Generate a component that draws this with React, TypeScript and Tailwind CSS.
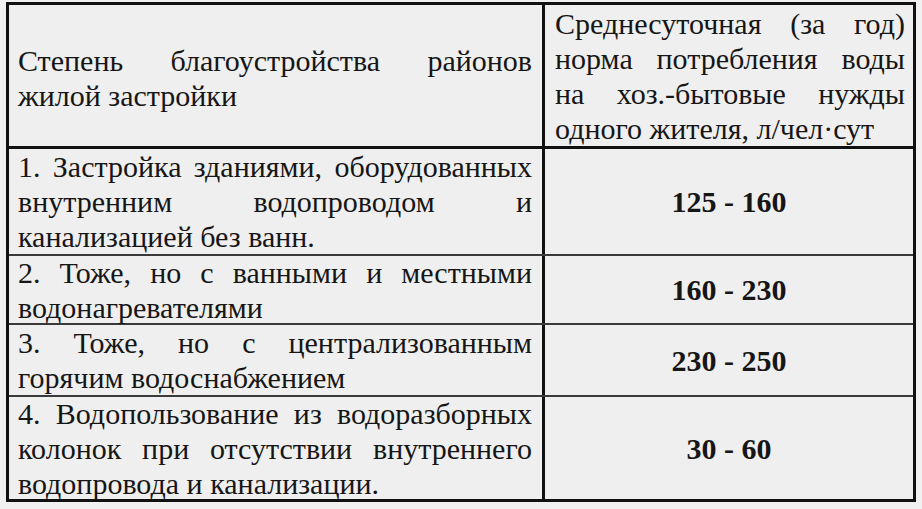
const rows = [
  {
    lines: ['1. Застройка зданиями, оборудованных', 'внутренним водопроводом и', 'канализацией без ванн.'],
    norm: '125 - 160',
    h: 'h-[107px]',
  },
  {
    lines: ['2. Тоже, но с ванными и местными', 'водонагревателями'],
    norm: '160 - 230',
    h: 'h-[69px]',
  },
  {
    lines: ['3. Тоже, но с централизованным', 'горячим водоснабжением'],
    norm: '230 - 250',
    h: 'h-[72px]',
  },
  {
    lines: ['4. Водопользование из водоразборных', 'колонок при отсутствии внутреннего', 'водопровода и канализации.'],
    norm: '30 - 60',
    h: 'h-[102px]',
  },
]

// every line but the last is stretched edge to edge, as in the printed table
function Justified({ lines }: { lines: string[] }) {
  return (
    <div className="w-full">
      {lines.map((line, i) =>
        i < lines.length - 1 ? (
          <div key={i} className="whitespace-nowrap text-justify [text-align-last:justify]">
            {line}
          </div>
        ) : (
          <div key={i} className="whitespace-nowrap">
            {line}
          </div>
        )
      )}
    </div>
  )
}

export default function App() {
  return (
    <div className="w-[922px] h-[509px] bg-[#f1f1f1] pt-[2px] pl-[6px] text-[#161616] font-[family-name:Liberation_Serif] text-[30px] leading-[35px]">
      <div className="w-[910px] border-[3px] border-[#111] bg-[#efefef]">
        <div className="flex border-b-[3px] border-[#111]">
          <div className="w-[536px] border-r-[3px] border-[#111] flex items-center pl-[9px] pr-[10px] pt-[4px]">
            <Justified lines={['Степень благоустройства районов', 'жилой застройки']} />
          </div>
          <div className="flex-1 pl-[10px] pr-[8px] pt-[1px]">
            <Justified
              lines={['Среднесуточная (за год)', 'норма потребления воды', 'на хоз.-бытовые нужды', 'одного жителя, л/чел·сут']}
            />
          </div>
        </div>
        {rows.map((row, i) => (
          <div
            key={row.norm}
            className={`flex ${row.h} ${i < rows.length - 1 ? 'border-b-2 border-[#3a3a3a]' : ''}`}
          >
            <div className="w-[536px] border-r-[3px] border-[#111] flex items-center pl-[9px] pr-[10px]">
              <Justified lines={row.lines} />
            </div>
            <div className="flex-1 flex items-center justify-center font-bold">{row.norm}</div>
          </div>
        ))}
      </div>
    </div>
  )
}
